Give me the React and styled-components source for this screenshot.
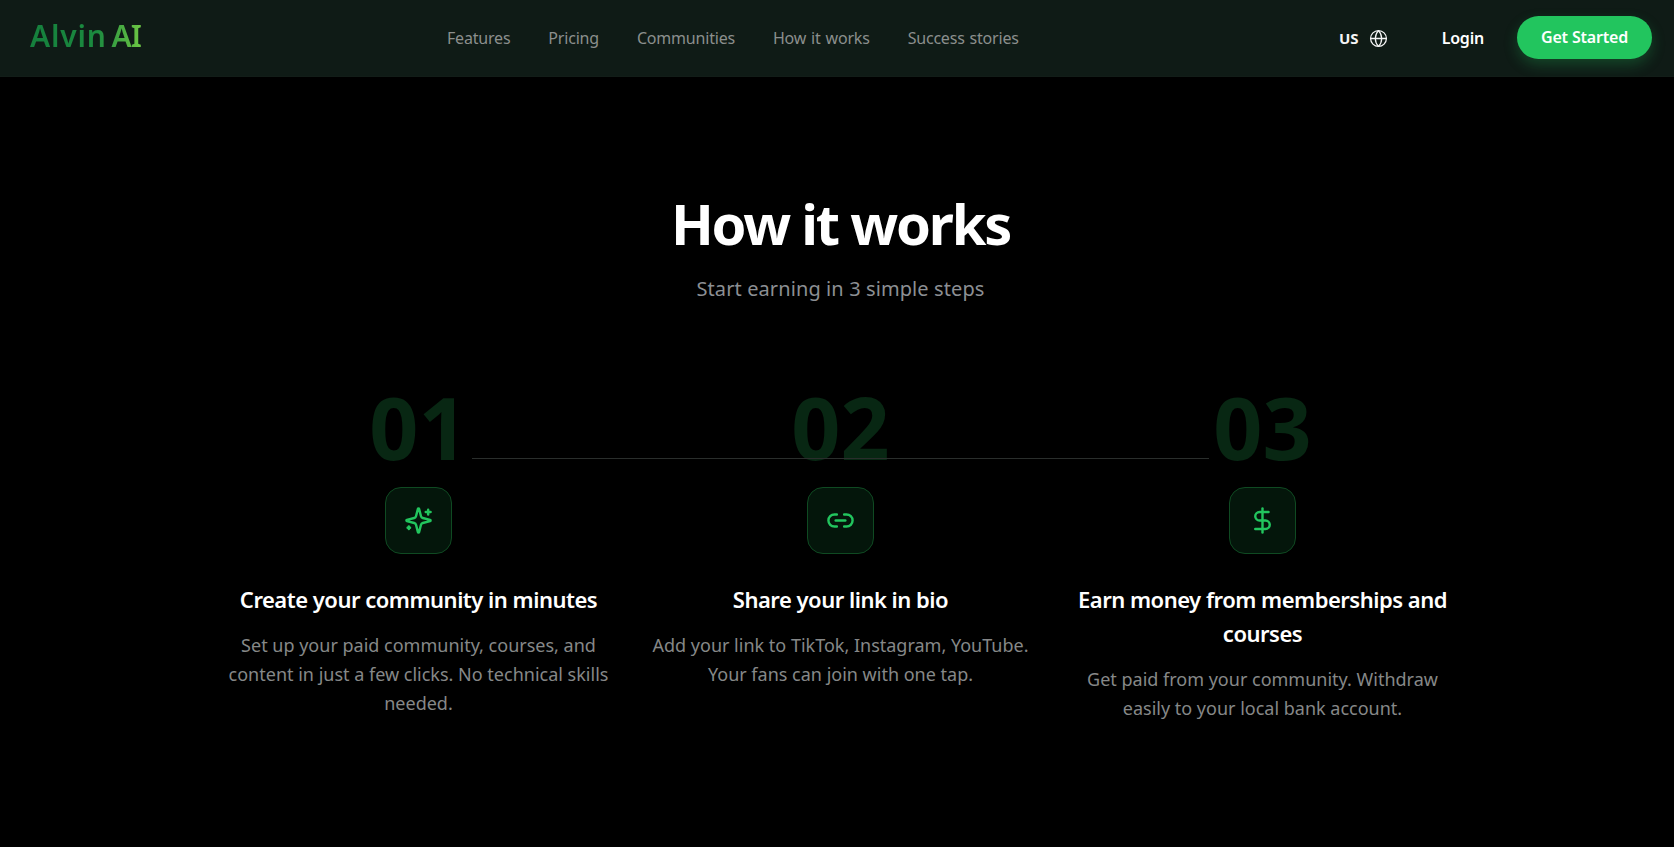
import styled, { createGlobalStyle } from "styled-components"
import { Globe, Link2, DollarSign } from "lucide-react"

const GlobalStyle = createGlobalStyle`
  html, body {
    margin: 0;
    background: #000;
    font-family: "Noto Sans", "Open Sans", "Liberation Sans", sans-serif;
  }
`

const Page = styled.div`
  min-height: 847px;
  background: #000;
  overflow: hidden;
`

const NavBar = styled.header`
  display: flex;
  align-items: center;
  height: 77px;
  box-sizing: border-box;
  padding: 0 22px 0 30px;
  background: #0f1b16;
  border-bottom: 1px solid #121d18;
`

const Logo = styled.div`
  width: 111px;
  margin-bottom: 6px;
  font-size: 30px;
  font-weight: 600;
  word-spacing: -3px;
  white-space: nowrap;
  background: linear-gradient(90deg, #15803d 0%, #1b8a3f 60%, #6cc644 100%);
  -webkit-background-clip: text;
  background-clip: text;
  color: transparent;
`

const LogoWord = styled.span`
  letter-spacing: ${props => props.$spacing}px;
`

const NavLinks = styled.nav`
  display: flex;
  gap: 38px;
  margin-left: 306px;
`

const NavLink = styled.a`
  font-size: 16px;
  color: #8b8f8d;
  letter-spacing: -0.2px;
  word-spacing: 1px;
  white-space: nowrap;
`

const NavRight = styled.div`
  display: flex;
  align-items: center;
  margin-left: auto;
`

const Lang = styled.div`
  display: flex;
  align-items: center;
  gap: 10px;
  margin-right: 54px;
  color: #f5f5f5;
  font-size: 15px;
  font-weight: 700;
`

const Login = styled.a`
  margin-right: 33px;
  color: #fff;
  font-size: 16px;
  font-weight: 600;
  letter-spacing: -0.2px;
`

const StartButton = styled.button`
  width: 135px;
  height: 43px;
  margin-bottom: 2px;
  border: none;
  border-radius: 999px;
  background: #22c55e;
  color: #fff;
  font: 600 16px "Noto Sans", sans-serif;
  letter-spacing: -0.2px;
  box-shadow: 0 6px 14px rgba(34, 197, 94, 0.25);
`

const Main = styled.main`
  display: flex;
  flex-direction: column;
  align-items: center;
  padding: 112px 0 0 7px;
`

const Title = styled.h1`
  margin: 0;
  font-size: 56px;
  line-height: 68px;
  font-weight: 700;
  color: #fff;
  letter-spacing: -2.2px;
`

const Subtitle = styled.p`
  margin: 18px 0 0;
  font-size: 20px;
  line-height: 28px;
  color: #8c8f93;
  letter-spacing: 0.1px;
`

const Steps = styled.div`
  position: relative;
  display: grid;
  grid-template-columns: repeat(3, 390px);
  gap: 32px;
  margin-top: 80px;
`

const Connector = styled.div`
  position: absolute;
  top: 75px;
  left: 248px;
  width: 737px;
  height: 1px;
  background: #2a2e2c;
`

const Step = styled.div`
  display: flex;
  flex-direction: column;
  align-items: center;
  text-align: center;
`

const StepNumber = styled.div`
  font-size: 86px;
  line-height: 88px;
  font-weight: 700;
  color: #082713;
`

const IconBox = styled.div`
  display: flex;
  align-items: center;
  justify-content: center;
  box-sizing: border-box;
  width: 67px;
  height: 67px;
  margin-top: 16px;
  border: 1px solid #0f4a22;
  border-radius: 16px;
  background: #04160b;
  color: #22c55e;
`

const StepTitle = styled.h3`
  margin: 28px 0 0;
  font-size: 22px;
  line-height: 34px;
  font-weight: 600;
  color: #fff;
  letter-spacing: -0.5px;
`

const StepText = styled.p`
  margin: 15px 0 0;
  font-size: 18px;
  line-height: 28.8px;
  color: #868888;
`

const SparkIcon = ({ size, strokeWidth }) => (
  <svg width={size} height={size} viewBox="0 0 24 24" fill="none" stroke="currentColor" strokeWidth={strokeWidth} strokeLinecap="round" strokeLinejoin="round">
    <path d="M9.937 15.5A2 2 0 0 0 8.5 14.063l-6.135-1.582a.5.5 0 0 1 0-.962L8.5 9.936A2 2 0 0 0 9.937 8.5l1.582-6.135a.5.5 0 0 1 .963 0L14.063 8.5A2 2 0 0 0 15.5 9.937l6.135 1.581a.5.5 0 0 1 0 .964L15.5 14.063a2 2 0 0 0-1.437 1.437l-1.582 6.135a.5.5 0 0 1-.963 0z" />
    <path d="M20 3v4" />
    <path d="M22 5h-4" />
    <path d="M4 17v2" />
    <path d="M5 18H3" />
  </svg>
)

const links = ["Features", "Pricing", "Communities", "How it works", "Success stories"]

const steps = [
  {
    num: "01",
    icon: SparkIcon,
    title: "Create your community in minutes",
    text: "Set up your paid community, courses, and content in just a few clicks. No technical skills needed."
  },
  {
    num: "02",
    icon: Link2,
    title: "Share your link in bio",
    text: "Add your link to TikTok, Instagram, YouTube. Your fans can join with one tap."
  },
  {
    num: "03",
    icon: DollarSign,
    title: "Earn money from memberships and courses",
    text: "Get paid from your community. Withdraw easily to your local bank account."
  }
]

const App = () => {
  return (
    <Page>
      <GlobalStyle />
      <NavBar>
        <Logo>
          <LogoWord $spacing={0.8}>Alvin</LogoWord> <LogoWord $spacing={-0.9}>AI</LogoWord>
        </Logo>
        <NavLinks>
          {links.map(link => (
            <NavLink key={link}>{link}</NavLink>
          ))}
        </NavLinks>
        <NavRight>
          <Lang>
            US
            <Globe size={19} strokeWidth={1.6} />
          </Lang>
          <Login>Login</Login>
          <StartButton>Get Started</StartButton>
        </NavRight>
      </NavBar>
      <Main>
        <Title>How it works</Title>
        <Subtitle>Start earning in 3 simple steps</Subtitle>
        <Steps>
          <Connector />
          {steps.map(step => (
            <Step key={step.num}>
              <StepNumber>{step.num}</StepNumber>
              <IconBox>
                <step.icon size={29} strokeWidth={2} />
              </IconBox>
              <StepTitle>{step.title}</StepTitle>
              <StepText>{step.text}</StepText>
            </Step>
          ))}
        </Steps>
      </Main>
    </Page>
  )
}

export default App
